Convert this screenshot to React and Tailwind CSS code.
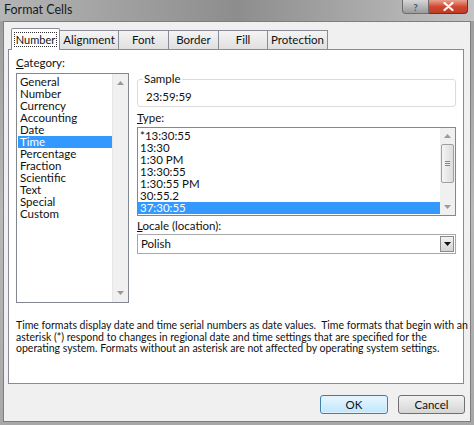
import React from 'react';

const categories = [
  'General', 'Number', 'Currency', 'Accounting', 'Date', 'Time', 'Percentage',
  'Fraction', 'Scientific', 'Text', 'Special', 'Custom',
];

const types = ['*13:30:55', '13:30', '1:30 PM', '13:30:55', '1:30:55 PM', '30:55.2', '37:30:55'];

const tabs = ['Number', 'Alignment', 'Font', 'Border', 'Fill', 'Protection'];
const tabWidths = ['w-[49px]', 'w-[59px]', 'w-[50px]', 'w-[50px]', 'w-[49px]', 'w-[60px]'];

const UpArrow = () => (
  <svg width="7" height="4" viewBox="0 0 7 4"><path d="M0 4 L3.5 0 L7 4 Z" fill="#9a9a9a" /></svg>
);
const DownArrow = ({ color = '#9a9a9a' }) => (
  <svg width="7" height="4" viewBox="0 0 7 4"><path d="M0 0 L3.5 4 L7 0 Z" fill={color} /></svg>
);

const App = () => {
  return (
    <div
      className="w-[474px] h-[425px] flex flex-col bg-gradient-to-b from-[#9c9c9c] via-[#b8b8b8] to-[#a8a8a8] overflow-hidden"
      style={{ fontFamily: 'Lato, "Noto Sans", sans-serif' }}
    >
      {/* Title bar */}
      <div className="h-[21px] flex items-start justify-between bg-gradient-to-r from-[#b5b5b5] via-[#8d8d8d] to-[#c4c4c4]">
        <div className="pl-[4px] pt-[3px] text-[12.5px] leading-[14px] text-[#1a1a1a]">Format Cells</div>
        <div className="flex mr-[6px]">
          <div className="w-[27px] h-[14px] rounded-bl-[4px] border border-t-0 border-[#6d6d6d] bg-gradient-to-b from-[#d6d6d6] to-[#9a9a9a] flex items-center justify-center text-[10px] font-bold text-[#4a5a70] leading-none">?</div>
          <div className="w-[39px] h-[14px] rounded-br-[4px] border border-t-0 border-l-0 border-[#7a2a20] bg-gradient-to-b from-[#e8a090] via-[#d04a33] to-[#c03a24] flex items-center justify-center">
            <svg width="11" height="9" viewBox="0 0 11 9">
              <path d="M1.5 1 L9.5 8 M9.5 1 L1.5 8" stroke="#fff" strokeWidth="2.2" strokeLinecap="round" />
            </svg>
          </div>
        </div>
      </div>

      {/* Body */}
      <div className="flex-1 mx-[3px] mb-[3px] bg-[#f0f0f0] border border-[#7e7e7e] flex flex-col pl-[4px] pr-[5px]">
        {/* Tabs */}
        <div className="flex items-end h-[28px] pl-[3px] mt-[-1px]">
          {tabs.map((t, i) =>
            i === 0 ? (
              <div
                key={t}
                className={`${tabWidths[i]} h-[22px] bg-white border border-b-0 border-[#898c95] rounded-t-[2px] relative z-10 mb-[-1px] flex items-center justify-center`}
              >
                <span className="px-[1px] border border-dotted border-[#333] text-[11px] leading-[13px] text-[#111]">{t}</span>
              </div>
            ) : (
              <div
                key={t}
                className={`${tabWidths[i]} h-[19px] bg-gradient-to-b from-[#f4f4f4] to-[#e0e0e0] border border-b-0 border-l-0 border-[#898c95] flex items-center justify-center text-[11.5px] text-[#111]`}
              >
                {t}
              </div>
            )
          )}
        </div>

        {/* Panel */}
        <div className="w-[456px] h-[335px] bg-white border border-[#898c95] flex flex-col px-[7px]">
          <div className="flex gap-[8px] mt-[6px]">
            {/* Category */}
            <div className="flex flex-col">
              <div className="text-[11.5px] leading-[14px] text-[#111] h-[17px]"><span className="underline">C</span>ategory:</div>
              <div className="w-[113px] h-[230px] border border-[#828790] bg-white flex">
                <div className="flex-1 pt-[2px] pl-[1px]">
                  {categories.map((c) => (
                    <div
                      key={c}
                      className={`h-[12px] pl-[2px] text-[11.5px] leading-[12px] ${c === 'Time' ? 'bg-[#3399ff] text-white' : 'text-[#111]'}`}
                    >
                      {c}
                    </div>
                  ))}
                </div>
                <div className="w-[16px] bg-[#f0f0f0] border-l border-[#e6e6e6] flex flex-col items-center justify-between py-[7px]">
                  <UpArrow />
                  <DownArrow />
                </div>
              </div>
            </div>

            {/* Right column */}
            <div className="flex flex-col w-[320px]">
              {/* Sample */}
              <div className="h-[28px] mt-[23px] border border-[#dcdcdc] rounded-[3px] relative flex items-end pb-[3px] pl-[8px]">
                <span className="absolute top-[-8px] left-[5px] bg-white px-[1px] text-[11.5px] leading-[13px] text-[#111]">Sample</span>
                <span className="text-[11.5px] leading-[13px] text-[#111]">23:59:59</span>
              </div>
              <div className="h-[20px] text-[11.5px] leading-[14px] text-[#111] pt-[4px]"><span className="underline">T</span>ype:</div>
              <div className="h-[89px] border border-[#828790] bg-white flex">
                <div className="flex-1 pt-[2px]">
                  {types.map((t, i) => (
                    <div
                      key={i}
                      className={`h-[12px] pl-[2px] text-[11.5px] leading-[12px] ${i === 6 ? 'bg-[#3399ff] text-white' : 'text-[#111]'}`}
                    >
                      {t}
                    </div>
                  ))}
                </div>
                <div className="w-[15px] bg-[#f0f0f0] flex flex-col items-center py-[6px]">
                  <UpArrow />
                  <div className="mt-[6px] w-[13px] h-[39px] rounded-[2px] border border-[#a0a0a0] bg-gradient-to-r from-[#f4f4f4] to-[#dcdcdc] flex flex-col items-center justify-center gap-[1px]">
                    <div className="w-[5px] h-px bg-[#888]" />
                    <div className="w-[5px] h-px bg-[#888]" />
                    <div className="w-[5px] h-px bg-[#888]" />
                  </div>
                  <div className="mt-auto"><DownArrow /></div>
                </div>
              </div>
              <div className="h-[18px] text-[11.5px] leading-[14px] text-[#111] pt-[3px]"><span className="underline">L</span>ocale (location):</div>
              <div className="h-[20px] border border-[#a8a8a8] bg-white flex items-center justify-between pl-[3px] pr-[1px]">
                <span className="text-[11.5px] text-[#111]">Polish</span>
                <div className="w-[14px] h-[16px] border border-[#8a8a8a] bg-gradient-to-b from-[#f2f2f2] to-[#d4d4d4] flex items-center justify-center">
                  <DownArrow color="#111" />
                </div>
              </div>
            </div>
          </div>

          <p className="mt-[17px] text-[10.5px] leading-[11.5px] text-[#111] whitespace-nowrap">
            Time formats display date and time serial numbers as date values.&nbsp; Time formats that begin with an
            <br />
            asterisk (*) respond to changes in regional date and time settings that are specified for the
            <br />
            operating system. Formats without an asterisk are not affected by operating system settings.
          </p>
        </div>

        {/* Buttons */}
        <div className="flex justify-end gap-[10px] mt-[11px]">
          <button className="w-[68px] h-[19px] rounded-[3px] border border-[#3c7fb1] bg-gradient-to-b from-[#eaf6fd] to-[#bee6fd] shadow-[inset_0_0_0_1px_#dff2fc] text-[11.5px] text-[#111]">OK</button>
          <button className="w-[67px] h-[19px] rounded-[3px] border border-[#707070] bg-gradient-to-b from-[#f2f2f2] to-[#d5d5d5] text-[11.5px] text-[#111]">Cancel</button>
        </div>
      </div>
    </div>
  );
};

export default App;
